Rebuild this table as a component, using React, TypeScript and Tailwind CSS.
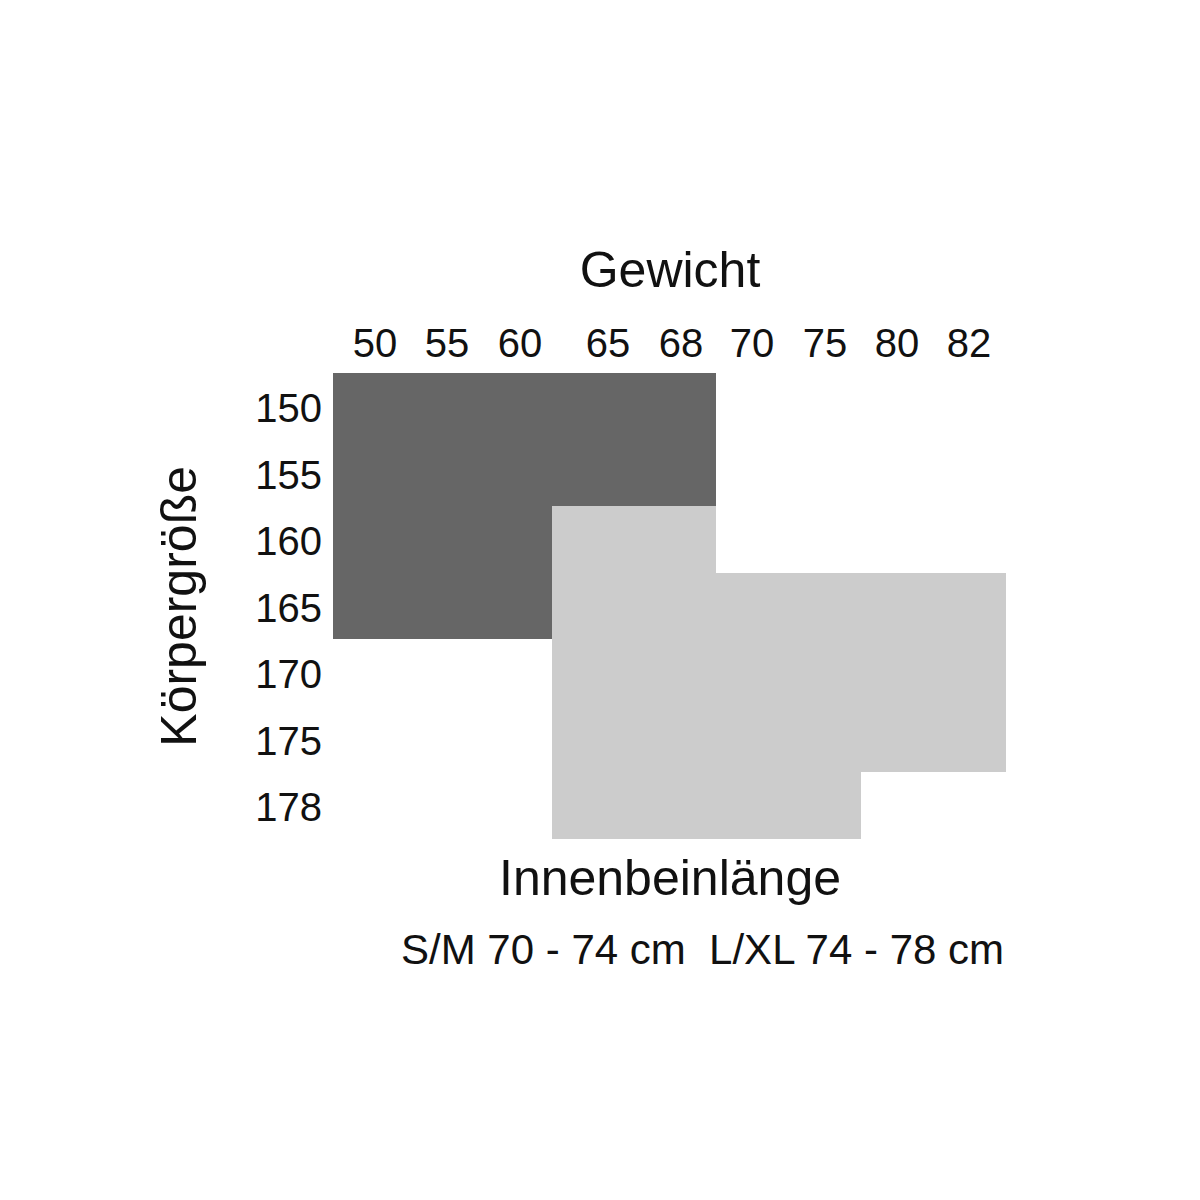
import React from "react";

const colLabels = [
  { t: "50", ml: "ml-0" },
  { t: "55", ml: "ml-[12px]" },
  { t: "60", ml: "ml-[13px]" },
  { t: "65", ml: "ml-[28px]" },
  { t: "68", ml: "ml-[13px]" },
  { t: "70", ml: "ml-[11px]" },
  { t: "75", ml: "ml-[13px]" },
  { t: "80", ml: "ml-[12px]" },
  { t: "82", ml: "ml-[12px]" },
];

const rowLabels = ["150", "155", "160", "165", "170", "175", "178"];

export default function App() {
  return (
    <div
      className="w-[1200px] h-[1200px] bg-white text-[#111111] overflow-hidden"
      style={{ fontFamily: '"Liberation Sans", Arial, sans-serif' }}
    >
      <div className="pt-[245px] flex flex-col">
        <div className="flex justify-center pl-[140px] text-[50px] leading-[50px] h-[50px]">
          <span>Gewicht</span>
        </div>

        <div className="mt-[28px] flex pl-[345px] text-[40px] leading-[40px] h-[40px]">
          {colLabels.map((c) => (
            <span key={c.t} className={`w-[60px] text-center ${c.ml}`}>
              {c.t}
            </span>
          ))}
        </div>

        <div className="mt-[10px] flex pl-[154px]">
          <div className="w-[50px] flex items-center justify-center">
            <span className="text-[50px] leading-[50px] [writing-mode:vertical-rl] rotate-180 whitespace-nowrap">
              Körpergröße
            </span>
          </div>

          <div className="ml-[48px] w-[70px] pt-[2px] flex flex-col text-[40px]">
            {rowLabels.map((r) => (
              <div key={r} className="h-[66.5px] leading-[66.5px] text-right">
                {r}
              </div>
            ))}
          </div>

          <div className="ml-[11px] grid grid-cols-[73px_73px_73px_82px_82px_72.5px_72.5px_72.5px_72.5px] grid-rows-[repeat(7,66.5px)]">
            <div className="row-start-1 row-end-3 col-start-1 col-end-6 bg-[#666666]" />
            <div className="row-start-3 row-end-5 col-start-1 col-end-4 bg-[#666666]" />
            <div className="row-start-3 row-end-4 col-start-4 col-end-6 bg-[#cccccc]" />
            <div className="row-start-4 row-end-7 col-start-4 col-end-10 bg-[#cccccc]" />
            <div className="row-start-7 row-end-8 col-start-4 col-end-8 bg-[#cccccc]" />
          </div>
        </div>

        <div className="mt-[12px] flex justify-center pl-[140px] text-[50px] leading-[50px] h-[50px]">
          <span>Innenbeinlänge</span>
        </div>

        <div className="mt-[26px] pl-[401px] text-[42px] leading-[42px] h-[42px] whitespace-pre">
          S/M 70 - 74 cm  L/XL 74 - 78 cm
        </div>
      </div>
    </div>
  );
}
